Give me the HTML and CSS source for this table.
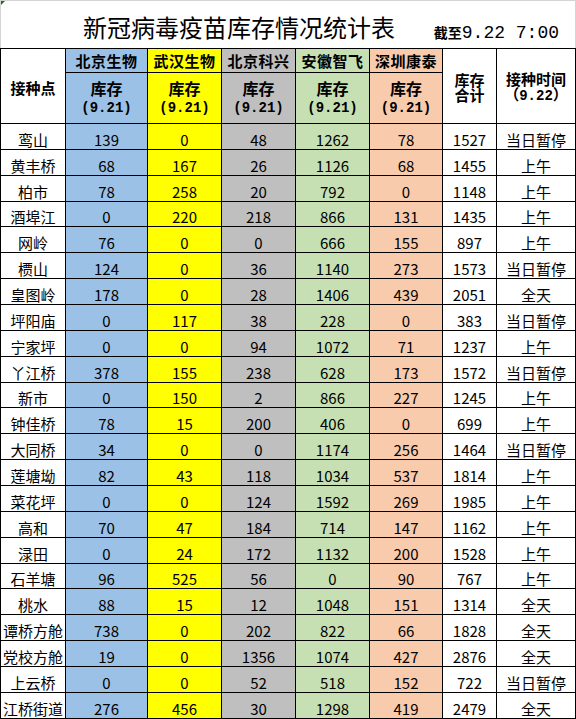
FILE: index.html
```html
<!DOCTYPE html>
<html lang="zh-CN">
<head>
<meta charset="utf-8">
<title>新冠病毒疫苗库存情况统计表</title>
<link rel="stylesheet" href="styles.css">
</head>
<body>
<div class="sheet">
  <span class="flag"></span>
  <div class="titlebar">
    <h1 class="title">新冠病毒疫苗库存情况统计表</h1>
    <div class="date"><b class="date-cn">截至</b><span class="mono">9.22 7:00</span></div>
  </div>
  <table class="grid">
    <colgroup>
      <col class="c-name"><col class="c-bj"><col class="c-wh"><col class="c-kx"><col class="c-ah"><col class="c-sz"><col class="c-sum"><col class="c-time">
    </colgroup>
    <thead>
      <tr class="h1">
        <th rowspan="2" class="merged">接种点</th>
        <th class="blue">北京生物</th>
        <th class="yellow">武汉生物</th>
        <th class="gray">北京科兴</th>
        <th class="green">安徽智飞</th>
        <th class="peach">深圳康泰</th>
        <th rowspan="2" class="merged">库存<br>合计</th>
        <th rowspan="2" class="merged">接种时间<br>（<span class="mono">9.22</span>）</th>
      </tr>
      <tr class="h2">
        <th class="blue">库存<br><span class="mono">(9.21)</span></th>
        <th class="yellow">库存<br><span class="mono">(9.21)</span></th>
        <th class="gray">库存<br><span class="mono">(9.21)</span></th>
        <th class="green">库存<br><span class="mono">(9.21)</span></th>
        <th class="peach">库存<br><span class="mono">(9.21)</span></th>
      </tr>
    </thead>
    <tbody>
      <tr><td>鸾山</td><td class="blue">139</td><td class="yellow">0</td><td class="gray">48</td><td class="green">1262</td><td class="peach">78</td><td>1527</td><td>当日暂停</td></tr>
      <tr><td>黄丰桥</td><td class="blue">68</td><td class="yellow">167</td><td class="gray">26</td><td class="green">1126</td><td class="peach">68</td><td>1455</td><td>上午</td></tr>
      <tr><td>柏市</td><td class="blue">78</td><td class="yellow">258</td><td class="gray">20</td><td class="green">792</td><td class="peach">0</td><td>1148</td><td>上午</td></tr>
      <tr><td>酒埠江</td><td class="blue">0</td><td class="yellow">220</td><td class="gray">218</td><td class="green">866</td><td class="peach">131</td><td>1435</td><td>上午</td></tr>
      <tr><td>网岭</td><td class="blue">76</td><td class="yellow">0</td><td class="gray">0</td><td class="green">666</td><td class="peach">155</td><td>897</td><td>上午</td></tr>
      <tr><td>槚山</td><td class="blue">124</td><td class="yellow">0</td><td class="gray">36</td><td class="green">1140</td><td class="peach">273</td><td>1573</td><td>当日暂停</td></tr>
      <tr><td>皇图岭</td><td class="blue">178</td><td class="yellow">0</td><td class="gray">28</td><td class="green">1406</td><td class="peach">439</td><td>2051</td><td>全天</td></tr>
      <tr><td>坪阳庙</td><td class="blue">0</td><td class="yellow">117</td><td class="gray">38</td><td class="green">228</td><td class="peach">0</td><td>383</td><td>当日暂停</td></tr>
      <tr><td>宁家坪</td><td class="blue">0</td><td class="yellow">0</td><td class="gray">94</td><td class="green">1072</td><td class="peach">71</td><td>1237</td><td>上午</td></tr>
      <tr><td>丫江桥</td><td class="blue">378</td><td class="yellow">155</td><td class="gray">238</td><td class="green">628</td><td class="peach">173</td><td>1572</td><td>当日暂停</td></tr>
      <tr><td>新市</td><td class="blue">0</td><td class="yellow">150</td><td class="gray">2</td><td class="green">866</td><td class="peach">227</td><td>1245</td><td>上午</td></tr>
      <tr><td>钟佳桥</td><td class="blue">78</td><td class="yellow">15</td><td class="gray">200</td><td class="green">406</td><td class="peach">0</td><td>699</td><td>上午</td></tr>
      <tr><td>大同桥</td><td class="blue">34</td><td class="yellow">0</td><td class="gray">0</td><td class="green">1174</td><td class="peach">256</td><td>1464</td><td>当日暂停</td></tr>
      <tr><td>莲塘坳</td><td class="blue">82</td><td class="yellow">43</td><td class="gray">118</td><td class="green">1034</td><td class="peach">537</td><td>1814</td><td>上午</td></tr>
      <tr><td>菜花坪</td><td class="blue">0</td><td class="yellow">0</td><td class="gray">124</td><td class="green">1592</td><td class="peach">269</td><td>1985</td><td>上午</td></tr>
      <tr><td>高和</td><td class="blue">70</td><td class="yellow">47</td><td class="gray">184</td><td class="green">714</td><td class="peach">147</td><td>1162</td><td>上午</td></tr>
      <tr><td>渌田</td><td class="blue">0</td><td class="yellow">24</td><td class="gray">172</td><td class="green">1132</td><td class="peach">200</td><td>1528</td><td>上午</td></tr>
      <tr><td>石羊塘</td><td class="blue">96</td><td class="yellow">525</td><td class="gray">56</td><td class="green">0</td><td class="peach">90</td><td>767</td><td>上午</td></tr>
      <tr><td>桃水</td><td class="blue">88</td><td class="yellow">15</td><td class="gray">12</td><td class="green">1048</td><td class="peach">151</td><td>1314</td><td>全天</td></tr>
      <tr><td>谭桥方舱</td><td class="blue">738</td><td class="yellow">0</td><td class="gray">202</td><td class="green">822</td><td class="peach">66</td><td>1828</td><td>全天</td></tr>
      <tr><td>党校方舱</td><td class="blue">19</td><td class="yellow">0</td><td class="gray">1356</td><td class="green">1074</td><td class="peach">427</td><td>2876</td><td>全天</td></tr>
      <tr><td>上云桥</td><td class="blue">0</td><td class="yellow">0</td><td class="gray">52</td><td class="green">518</td><td class="peach">152</td><td>722</td><td>当日暂停</td></tr>
      <tr><td>江桥街道</td><td class="blue">276</td><td class="yellow">456</td><td class="gray">30</td><td class="green">1298</td><td class="peach">419</td><td>2479</td><td>全天</td></tr>
    </tbody>
  </table>
</div>
</body>
</html>
```
FILE: styles.css
```css
html, body {
  margin: 0;
  padding: 0;
  background: #ffffff;
}

.sheet {
  position: relative;
  width: 576px;
  height: 719px;
  overflow: hidden;
  font-family: "Noto Sans CJK SC", "Noto Sans", sans-serif;
  color: #000000;
}

.flag {
  position: absolute;
  left: 1px;
  top: 1px;
  width: 0;
  height: 0;
  border-top: 4px solid #0a7d0a;
  border-right: 4px solid transparent;
}

.titlebar {
  box-sizing: border-box;
  height: 48px;
  border-top: 1px solid #d4d4d4;
  border-left: 1px solid #d4d4d4;
  border-right: 1px solid #d4d4d4;
  display: flex;
  align-items: flex-start;
}

.title {
  margin: 14px 0 0 82px;
  font-size: 24px;
  line-height: 24px;
  font-weight: normal;
  white-space: nowrap;
}

.date {
  margin: 19px 16px 0 auto;
  font-size: 18px;
  line-height: 20px;
  white-space: nowrap;
}

.date-cn {
  font-size: 14px;
  font-weight: bold;
}

.mono {
  font-family: "Liberation Mono", "DejaVu Sans Mono", monospace;
}

.grid {
  border-collapse: collapse;
  table-layout: fixed;
  width: 575px;
}

.c-name { width: 65px; }
.c-bj { width: 82px; }
.c-wh { width: 74px; }
.c-kx { width: 74px; }
.c-ah { width: 74px; }
.c-sz { width: 73px; }
.c-sum { width: 54px; }
.c-time { width: 79px; }

.grid th,
.grid td {
  border: 1px solid #000000;
  padding: 0;
  text-align: center;
  white-space: nowrap;
  overflow: hidden;
}

.grid th {
  font-size: 15px;
  font-weight: bold;
  vertical-align: middle;
}

.h1 { height: 24px; }
.h1 th { line-height: 18px; letter-spacing: 0.5px; }

.h2 { height: 51px; }
.h2 th { line-height: 17px; font-size: 16px; }
.h2 th .mono { font-size: 14px; }

.h1 th.merged {
  font-size: 15px;
  line-height: 15px;
  letter-spacing: 0;
  padding-top: 2px;
}
.h1 th.merged .mono { font-size: 14px; }

.grid tbody tr { height: 25.86px; }

.grid td {
  font-size: 15px;
  line-height: 18px;
  vertical-align: bottom;
}

.blue { background: #9bc2e6; }
.yellow { background: #ffff00; }
.gray { background: #bfbfbf; }
.green { background: #c6e0b4; }
.peach { background: #f8cbad; }
```
